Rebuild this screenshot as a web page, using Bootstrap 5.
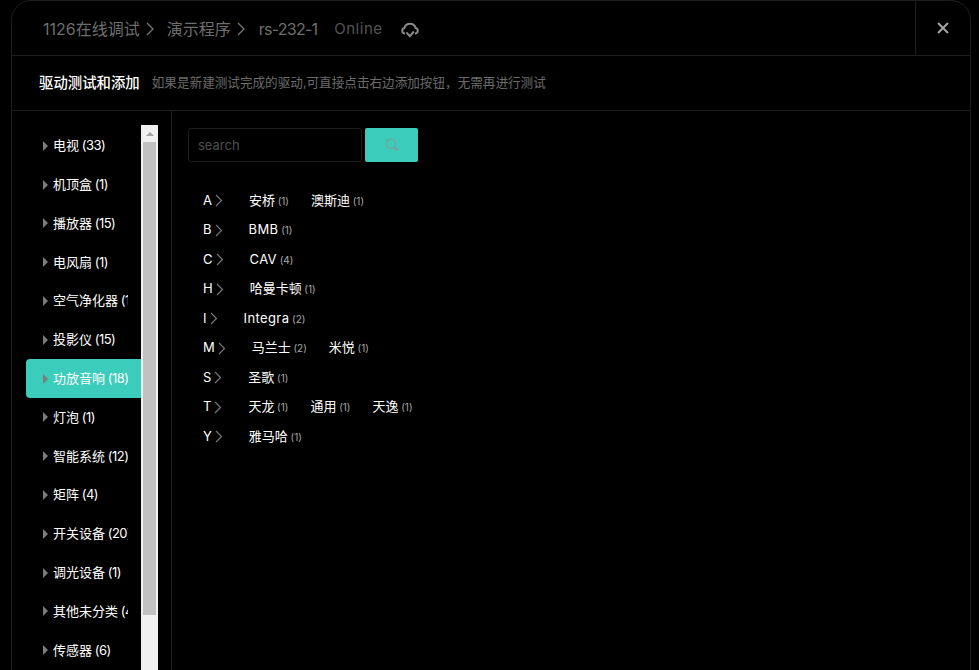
<!DOCTYPE html>
<html lang="zh">

<head>
  <meta charset="UTF-8" />
  <meta name="viewport" content="width=device-width, initial-scale=1.0" />
  <title>驱动测试和添加</title>
  <link href="https://cdn.jsdelivr.net/npm/bootstrap@5.3.0/dist/css/bootstrap.min.css" rel="stylesheet" />
  <script src="https://cdn.jsdelivr.net/npm/bootstrap@5.3.0/dist/js/bootstrap.bundle.min.js"></script>
  <style>
    html,
    body {
      height: 100%;
      overflow: hidden;
      background: #000;
    }

    body {
      font-family: Inter, "Noto Sans CJK SC", sans-serif;
      padding: 0 8px 0 11px;
    }

    .panel-box {
      height: 700px;
      border: 1px solid #1e1e1e;
      border-radius: 20px 20px 0 0;
      background: #000;
    }

    .panel-head {
      height: 55px;
      border-bottom: 1px solid #1e1e1e;
      padding-left: 31px;
      color: #6e6e6e;
      font-size: 16px;
    }

    .head-left {
      padding-top: 2px;
    }

    .crumb-arrow {
      width: 8px;
      height: 14px;
      margin: 0 13px 0 6px;
    }

    .rs-name {
      letter-spacing: -.75px;
      margin-left: 1px;
    }

    .state-text {
      font-size: 15px;
      color: #555;
      margin-left: 17px;
      letter-spacing: .5px;
      padding-top: 1px;
    }

    .cloud-mark {
      margin-left: 18px;
      margin-top: 2px;
    }

    .close-cell {
      width: 55px;
      height: 100%;
      border-left: 1px solid #1e1e1e;
    }

    .panel-sub {
      height: 55px;
      border-bottom: 1px solid #1e1e1e;
      padding-left: 27px;
    }

    .sub-title {
      color: #fff;
      font-size: 14.4px;
      font-weight: 500;
    }

    .sub-desc {
      color: #6c6c6c;
      font-size: 12.6px;
      margin-left: 12px;
    }

    .side-col {
      width: 160px;
      flex: none;
      border-right: 1px solid #1e1e1e;
      padding: 14px 13px 0 14px;
    }

    .side-list {
      width: 115px;
      flex: none;
      list-style: none;
      margin: 1.5px 0 0;
      padding: 0;
    }

    .side-item {
      height: 38.8px;
      padding: 0 13px 0 17px;
      display: flex;
      align-items: center;
      color: #fff;
      font-size: 13px;
      white-space: nowrap;
      border-radius: 4px 0 0 4px;
    }

    .side-item.on {
      background: #3bccbb;
    }

    .side-tri {
      flex: none;
      width: 0;
      height: 0;
      margin-right: 5px;
      border-left: 5px solid #7c7c7c;
      border-top: 5px solid transparent;
      border-bottom: 5px solid transparent;
    }

    .side-label {
      min-width: 0;
      overflow: hidden;
      word-spacing: -1px;
    }

    .side-num {
      letter-spacing: -.5px;
    }

    .fake-scroll {
      width: 17px;
      flex: none;
      background: #f1f1f1;
      padding: 0 2px;
    }

    .fake-up {
      height: 17px;
      padding-top: 7px;
    }

    .fake-up i {
      display: block;
      width: 0;
      height: 0;
      margin: 0 auto;
      border-bottom: 4px solid #a3a3a3;
      border-left: 4px solid transparent;
      border-right: 4px solid transparent;
    }

    .fake-thumb {
      height: 473px;
      background: #c1c1c1;
    }

    .main-col {
      padding: 17px 16px 0;
    }

    .search-row {
      gap: 3px;
    }

    .search-input.form-control {
      width: 174px;
      height: 34px;
      flex: none;
      background: #000;
      border: 1px solid #1e1e1e;
      border-radius: 3px;
      padding: 0 9px;
      font-size: 13px;
      color: #fff;
      box-shadow: none;
    }

    .search-input::placeholder {
      color: #4e4e4e;
    }

    .search-go.btn {
      width: 53px;
      height: 34px;
      background: #3bccbb;
      border: 0;
      border-radius: 2px;
      padding: 0;
    }

    .brand-rows {
      margin-top: 23.8px;
      padding-left: 15px;
    }

    .brand-row {
      height: 29.5px;
      color: #fff;
      font-size: 13px;
    }

    .row-arrow {
      width: 8px;
      height: 13px;
      margin: 0 26px 0 3px;
      flex: none;
    }

    .brand-item {
      margin-right: 22px;
      white-space: nowrap;
      word-spacing: -1px;
    }

    .brand-item span {
      font-size: 10px;
      color: #a8a8a8;
    }

    .brand-item b {
      font-weight: 400;
      letter-spacing: .4px;
    }
  </style>
</head>

<body>
  <div class="panel-box d-flex flex-column">
    <div class="panel-head d-flex align-items-center">
      <div class="head-left d-flex align-items-center">
        <span>1126在线调试</span>
        <svg class="crumb-arrow" viewBox="0 0 8 14" fill="none" stroke="#777" stroke-width="1.3"><path d="M1 1l6 6-6 6" /></svg>
        <span>演示程序</span>
        <svg class="crumb-arrow" viewBox="0 0 8 14" fill="none" stroke="#777" stroke-width="1.3"><path d="M1 1l6 6-6 6" /></svg>
        <span class="rs-name">rs-232-1</span>
        <span class="state-text">Online</span>
        <svg class="cloud-mark" width="18" height="16" viewBox="0 0 18 16" fill="none" stroke="#8a8a8a" stroke-width="2">
          <path d="M4 11.5H3.6A2.8 2.8 0 0 1 3.4 6A5.8 5.8 0 0 1 14.6 6A2.8 2.8 0 0 1 14.4 11.5H14" />
          <path d="M5.5 10.5l3.3 3.7 4-4.7" />
        </svg>
      </div>
      <div class="close-cell ms-auto d-flex align-items-center justify-content-center">
        <svg width="12" height="12" viewBox="0 0 12 12" stroke="#a5a5a5" stroke-width="2"><path d="M1 1l10 10M11 1L1 11" /></svg>
      </div>
    </div>
    <div class="panel-sub d-flex align-items-center">
      <span class="sub-title">驱动测试和添加</span>
      <span class="sub-desc">如果是新建测试完成的驱动,可直接点击右边添加按钮，无需再进行测试</span>
    </div>
    <div class="d-flex flex-grow-1 overflow-hidden">
      <div class="side-col d-flex align-items-start">
        <ul class="side-list">
          <li class="side-item"><i class="side-tri"></i><span class="side-label">电视 <span class="side-num">(33)</span></span></li>
          <li class="side-item"><i class="side-tri"></i><span class="side-label">机顶盒 <span class="side-num">(1)</span></span></li>
          <li class="side-item"><i class="side-tri"></i><span class="side-label">播放器 <span class="side-num">(15)</span></span></li>
          <li class="side-item"><i class="side-tri"></i><span class="side-label">电风扇 <span class="side-num">(1)</span></span></li>
          <li class="side-item"><i class="side-tri"></i><span class="side-label">空气净化器 <span class="side-num">(1)</span></span></li>
          <li class="side-item"><i class="side-tri"></i><span class="side-label">投影仪 <span class="side-num">(15)</span></span></li>
          <li class="side-item on"><i class="side-tri"></i><span class="side-label">功放音响 <span class="side-num">(18)</span></span></li>
          <li class="side-item"><i class="side-tri"></i><span class="side-label">灯泡 <span class="side-num">(1)</span></span></li>
          <li class="side-item"><i class="side-tri"></i><span class="side-label">智能系统 <span class="side-num">(12)</span></span></li>
          <li class="side-item"><i class="side-tri"></i><span class="side-label">矩阵 <span class="side-num">(4)</span></span></li>
          <li class="side-item"><i class="side-tri"></i><span class="side-label">开关设备 <span class="side-num">(20)</span></span></li>
          <li class="side-item"><i class="side-tri"></i><span class="side-label">调光设备 <span class="side-num">(1)</span></span></li>
          <li class="side-item"><i class="side-tri"></i><span class="side-label">其他未分类 <span class="side-num">(4)</span></span></li>
          <li class="side-item"><i class="side-tri"></i><span class="side-label">传感器 <span class="side-num">(6)</span></span></li>
        </ul>
        <div class="fake-scroll h-100">
          <div class="fake-up"><i></i></div>
          <div class="fake-thumb"></div>
        </div>
      </div>
      <div class="main-col flex-grow-1">
        <div class="search-row d-flex">
          <input class="form-control search-input" type="text" placeholder="search" />
          <button class="btn search-go d-flex align-items-center justify-content-center" type="button" aria-label="search">
            <svg width="14" height="14" viewBox="0 0 14 14" fill="none" stroke="#7f9c98" stroke-width="1.2">
              <circle cx="5.8" cy="5.8" r="4.6" />
              <path d="M9.2 9.2l3.6 3.6" stroke-width="1.8" />
            </svg>
          </button>
        </div>
        <div class="brand-rows">
          <div class="brand-row d-flex align-items-center"><span>A</span><svg class="row-arrow" viewBox="0 0 8 13" fill="none" stroke="#777" stroke-width="1.2"><path d="M1 1l5.5 5.5L1 12" /></svg><span class="brand-item">安桥 <span>(1)</span></span><span class="brand-item">澳斯迪 <span>(1)</span></span></div>
          <div class="brand-row d-flex align-items-center"><span>B</span><svg class="row-arrow" viewBox="0 0 8 13" fill="none" stroke="#777" stroke-width="1.2"><path d="M1 1l5.5 5.5L1 12" /></svg><span class="brand-item"><b>BMB</b> <span>(1)</span></span></div>
          <div class="brand-row d-flex align-items-center"><span>C</span><svg class="row-arrow" viewBox="0 0 8 13" fill="none" stroke="#777" stroke-width="1.2"><path d="M1 1l5.5 5.5L1 12" /></svg><span class="brand-item"><b>CAV</b> <span>(4)</span></span></div>
          <div class="brand-row d-flex align-items-center"><span>H</span><svg class="row-arrow" viewBox="0 0 8 13" fill="none" stroke="#777" stroke-width="1.2"><path d="M1 1l5.5 5.5L1 12" /></svg><span class="brand-item">哈曼卡顿 <span>(1)</span></span></div>
          <div class="brand-row d-flex align-items-center"><span>I</span><svg class="row-arrow" viewBox="0 0 8 13" fill="none" stroke="#777" stroke-width="1.2"><path d="M1 1l5.5 5.5L1 12" /></svg><span class="brand-item"><b>Integra</b> <span>(2)</span></span></div>
          <div class="brand-row d-flex align-items-center"><span>M</span><svg class="row-arrow" viewBox="0 0 8 13" fill="none" stroke="#777" stroke-width="1.2"><path d="M1 1l5.5 5.5L1 12" /></svg><span class="brand-item">马兰士 <span>(2)</span></span><span class="brand-item">米悦 <span>(1)</span></span></div>
          <div class="brand-row d-flex align-items-center"><span>S</span><svg class="row-arrow" viewBox="0 0 8 13" fill="none" stroke="#777" stroke-width="1.2"><path d="M1 1l5.5 5.5L1 12" /></svg><span class="brand-item">圣歌 <span>(1)</span></span></div>
          <div class="brand-row d-flex align-items-center"><span>T</span><svg class="row-arrow" viewBox="0 0 8 13" fill="none" stroke="#777" stroke-width="1.2"><path d="M1 1l5.5 5.5L1 12" /></svg><span class="brand-item">天龙 <span>(1)</span></span><span class="brand-item">通用 <span>(1)</span></span><span class="brand-item">天逸 <span>(1)</span></span></div>
          <div class="brand-row d-flex align-items-center"><span>Y</span><svg class="row-arrow" viewBox="0 0 8 13" fill="none" stroke="#777" stroke-width="1.2"><path d="M1 1l5.5 5.5L1 12" /></svg><span class="brand-item">雅马哈 <span>(1)</span></span></div>
        </div>
      </div>
    </div>
  </div>
</body>

</html>
